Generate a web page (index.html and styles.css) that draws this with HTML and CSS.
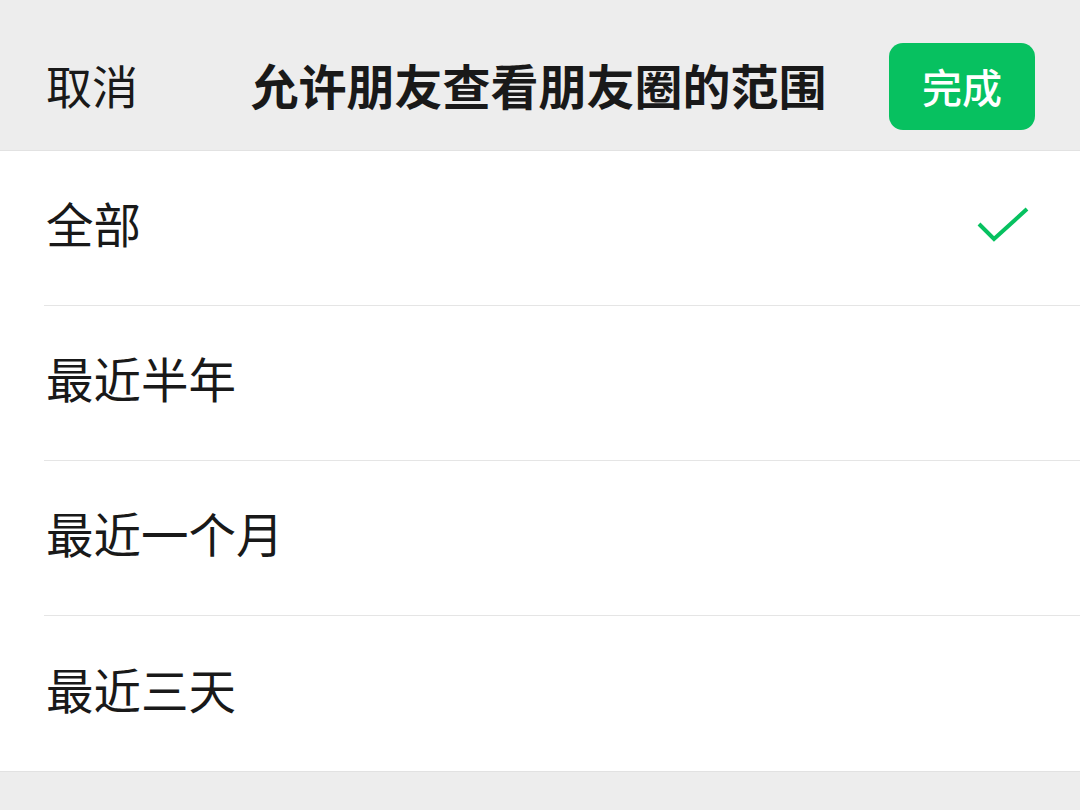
FILE: index.html
```html
<!DOCTYPE html>
<html lang="zh-CN">
<head>
    <meta charset="UTF-8">
    <title>允许朋友查看朋友圈的范围</title>
    <link rel="stylesheet" href="styles.css">
</head>
<body>
<div class="header">
    <div class="cancel">取消</div>
    <div class="title">允许朋友查看朋友圈的范围</div>
    <button class="done">完成</button>
</div>

<div class="list">
    <div class="row">
        <div class="label">全部</div>
        <svg class="check" width="56" height="40" viewBox="0 0 56 40">
            <polyline points="3,17 18,32 51,2" fill="none" stroke="#07c160" stroke-width="4"/>
        </svg>
    </div>
    <div class="row">
        <div class="label">最近半年</div>
    </div>
    <div class="row">
        <div class="label">最近一个月</div>
    </div>
    <div class="row last">
        <div class="label">最近三天</div>
    </div>
</div>
</body>
</html>
```
FILE: styles.css
```css
body {
    margin: 0;
    background-color: #ededed;
    font-family: "Noto Sans CJK SC", "Noto Sans", sans-serif;
    color: #191919;
}

.header {
    height: 151px;
    box-sizing: border-box;
    display: flex;
    align-items: center;
    padding: 22px 45px 0 46px;
    border-bottom: 1px solid #e2e2e2;
}

.cancel {
    font-size: 46px;
    line-height: 1;
    margin-top: -4px;
}

.title {
    flex: 1;
    text-align: center;
    font-size: 48px;
    font-weight: 600;
    line-height: 1;
    padding-left: 50px;
    margin-top: -4px;
}

.done {
    width: 146px;
    height: 87px;
    border: none;
    border-radius: 14px;
    background-color: #07c160;
    color: #fff;
    font-family: inherit;
    font-size: 40px;
    font-weight: 500;
    padding: 0;
}

.list {
    background-color: #fff;
    padding-left: 44px;
    border-bottom: 1px solid #e2e2e2;
}

.row {
    height: 155px;
    box-sizing: border-box;
    display: flex;
    align-items: center;
    justify-content: space-between;
    padding: 0 48px 10px 2px;
    border-bottom: 1px solid #e5e5e5;
}

.row.last {
    border-bottom: none;
}

.label {
    font-size: 47.5px;
    line-height: 1;
}

.check {
    display: block;
    margin-top: 8px;
}
```
